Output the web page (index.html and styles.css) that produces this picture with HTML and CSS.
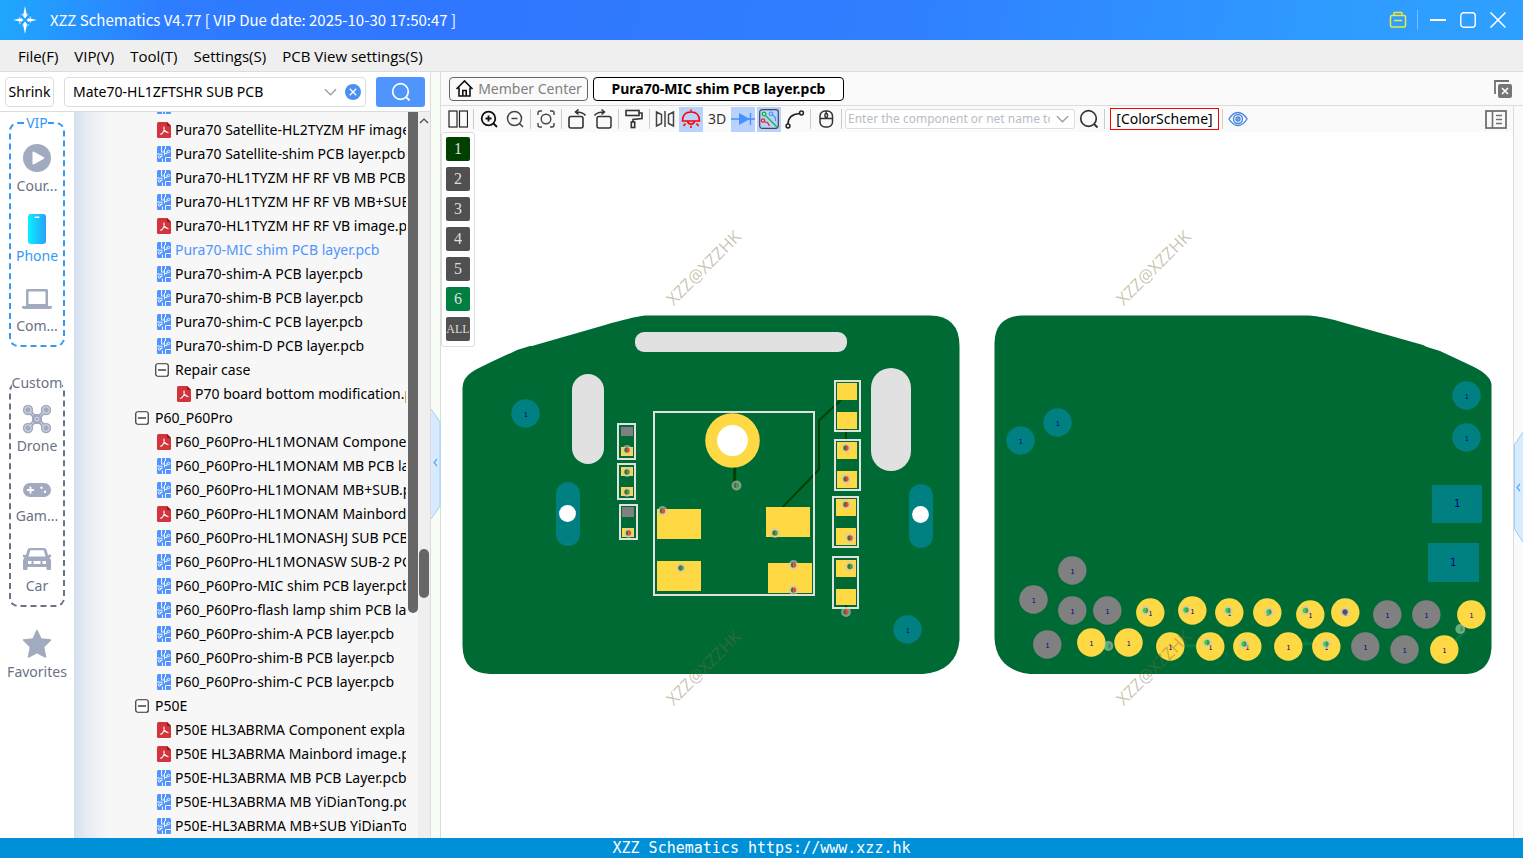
FILE: index.html
```html
<!DOCTYPE html>
<html lang="en">
<head>
<meta charset="utf-8">
<title>XZZ Schematics V4.77</title>
<link rel="stylesheet" href="styles.css">
</head>
<body>
<svg class="defs" aria-hidden="true">
  <symbol id="i-pdf" viewBox="0 0 14 16">
    <path d="M1.500 0H10L14 4V14.500Q14 16 12.500 16H1.500Q0 16 0 14.500V1.500Q0 0 1.500 0Z" fill="#d2343c"/>
    <path d="M10 0L14 4H11Q10 4 10 3Z" fill="#8e1218"/>
    <path d="M7 5Q7.800 7.500 6.200 10Q5 12.200 3.400 12.300M6.600 9.400Q9.200 9 11 10.700M6.800 6Q7.200 8.600 9.400 10.200" fill="none" stroke="#fff" stroke-width="1.100" stroke-linecap="round"/>
  </symbol>
  <symbol id="i-pcb" viewBox="0 0 14 16">
    <rect width="14" height="16" rx="1.500" fill="#5095fe"/>
    <path d="M4.500 0V6H7.500M8.500 0V3M7.500 3V9.500M7.500 7.500H10V5.500H11M3 10.500H5V8H0M5.500 16V12.500M8.500 16V11.500H14" fill="none" stroke="#fff" stroke-width=".9"/>
    <g fill="#5095fe" stroke="#fff" stroke-width=".9"><circle cx="11.500" cy="5.500" r="1.200"/><circle cx="2.500" cy="11" r="1.200"/></g>
  </symbol>
  <symbol id="i-minus" viewBox="0 0 14 14">
    <rect x=".75" y=".75" width="12.500" height="12.500" rx="2" fill="#fff" stroke="#333" stroke-width="1.200"/>
    <path d="M3 7H11" stroke="#222" stroke-width="1.300"/>
  </symbol>
  <symbol id="i-glass" viewBox="0 0 20 20">
    <circle cx="9.500" cy="9.500" r="7.800" fill="none" stroke="currentColor" stroke-width="1.700"/>
    <path d="M15 15L18.500 18.500" stroke="currentColor" stroke-width="1.900"/>
  </symbol>
  <symbol id="i-chev" viewBox="0 0 14 8"><path d="M1 1L7 7L13 1" fill="none" stroke="currentColor" stroke-width="1.500"/></symbol>
</svg>

<header class="titlebar">
  <svg class="logo" viewBox="0 0 24 28" aria-hidden="true">
    <path d="M12 0L14 10L12 12.500L10 10ZM12 28L14 18L12 15.500L10 18ZM0 14L8.500 12.200L10.500 14L8.500 15.800ZM24 14L15.500 12.200L13.500 14L15.500 15.800Z" fill="#fff"/>
    <circle cx="12" cy="14" r="6" fill="none" stroke="#cfe6ff" stroke-width="1.200" stroke-dasharray="2.700 2" opacity=".8"/>
  </svg>
  <h1 class="title">XZZ Schematics V4.77 [ VIP Due date: 2025-10-30 17:50:47 ]</h1>
  <div class="window-controls">
    <button class="win" aria-label="Account"><svg width="18" height="18" viewBox="0 0 18 18" fill="none" stroke="#e8ea3e" stroke-width="1.500"><rect x="1.500" y="4.500" width="15" height="11.500" rx="1.500"/><path d="M5 4.500V2.200Q5 1.500 6 1.500H12Q13 1.500 13 2.200V4.500M5 9.500H13"/></svg></button>
    <span class="win-sep"></span>
    <button class="win" aria-label="Minimize"><svg width="16" height="16" viewBox="0 0 16 16"><path d="M0 8H16" stroke="#fff" stroke-width="2"/></svg></button>
    <button class="win" aria-label="Maximize"><svg width="16" height="16" viewBox="0 0 16 16"><rect x=".75" y=".75" width="14.500" height="14.500" rx="3" fill="none" stroke="#fff" stroke-width="1.400"/></svg></button>
    <button class="win" aria-label="Close"><svg width="16" height="16" viewBox="0 0 16 16"><path d="M.5 .5L15.500 15.500M15.500 .5L.5 15.500" stroke="#fff" stroke-width="1.500"/></svg></button>
  </div>
</header>

<nav class="menubar">
  <button>File(F)</button><button>VIP(V)</button><button>Tool(T)</button><button>Settings(S)</button><button>PCB View settings(S)</button>
</nav>

<main class="workspace">
  <section class="left">
    <form class="searchbar">
      <button type="button" class="shrink">Shrink</button>
      <div class="combo">
        <input type="text" aria-label="Search files" value="Mate70-HL1ZFTSHR SUB PCB">
        <svg class="chev" aria-hidden="true"><use href="#i-chev"/></svg>
        <button type="button" class="clear" aria-label="Clear"><svg width="16" height="16" viewBox="0 0 16 16"><circle cx="8" cy="8" r="8" fill="#4a90f0"/><path d="M4.800 4.800L11.200 11.200M11.200 4.800L4.800 11.200" stroke="#fff" stroke-width="1.300"/></svg></button>
      </div>
      <button type="button" class="search-btn" aria-label="Search"><svg width="20" height="20"><use href="#i-glass"/></svg></button>
    </form>
    <div class="left-body">
      <aside class="cats">
        <fieldset class="group vip">
          <legend>VIP</legend>
          <button class="cat"><svg viewBox="0 0 30 30"><circle cx="15" cy="15" r="14" fill="#a2aac0"/><path d="M10.500 9.500Q10.500 8 12 8.700L21.500 14Q23 15 21.500 16L12 21.300Q10.500 22 10.500 20.500Z" fill="#fff"/></svg><span>Cour...</span></button>
          <button class="cat active"><svg viewBox="0 0 30 30"><defs><linearGradient id="ph"><stop offset="0" stop-color="#08f0ff"/><stop offset="1" stop-color="#2aa0fc"/></linearGradient></defs><rect x="6" y="1" width="18" height="30" rx="3" fill="url(#ph)"/><rect x="12.500" y="3.500" width="5" height="1.500" rx=".7" fill="#fff"/></svg><span>Phone</span></button>
          <button class="cat"><svg viewBox="0 0 30 30"><path d="M4 7.500Q4 6 5.500 6H24.500Q26 6 26 7.500V23H4ZM6.500 8.500V21H23.500V8.500Z" fill="#a2aac0" fill-rule="evenodd"/><path d="M0 23H30V24Q30 26 28 26H2Q0 26 0 24Z" fill="#a2aac0"/></svg><span>Com...</span></button>
        </fieldset>
        <fieldset class="group custom">
          <legend>Custom</legend>
          <button class="cat"><svg viewBox="0 0 30 30"><path d="M7 8L12 13V19L7 24M23 8L18 13V19L23 24" stroke="#a2aac0" stroke-width="4" fill="none"/><rect x="10" y="11" width="10" height="10" rx="2.500" fill="#a2aac0"/><g fill="#a2aac0"><circle cx="6" cy="7" r="5.200"/><circle cx="24" cy="7" r="5.200"/><circle cx="6" cy="25" r="5.200"/><circle cx="24" cy="25" r="5.200"/></g><g fill="none" stroke="#e4e7ee" stroke-width=".8"><circle cx="6" cy="7" r="3.300"/><circle cx="24" cy="7" r="3.300"/><circle cx="6" cy="25" r="3.300"/><circle cx="24" cy="25" r="3.300"/><circle cx="15" cy="16" r="2"/><path d="M7.500 8.500L11.500 12.500M22.500 8.500L18.500 12.500M7.500 23.500L11.500 19.500M22.500 23.500L18.500 19.500"/></g></svg><span>Drone</span></button>
          <button class="cat"><svg viewBox="0 0 30 30"><rect x="1" y="10" width="28" height="14" rx="7" fill="#a2aac0"/><path d="M8.500 13.500V20.500M5 17H12" stroke="#fff" stroke-width="1.800"/><circle cx="19.500" cy="14.800" r="1.200" fill="#fff"/><circle cx="23" cy="18.800" r="1.200" fill="#fff"/></svg><span>Gam...</span></button>
          <button class="cat"><svg viewBox="0 0 30 30"><path d="M8 5H22Q24 5 24.600 7L26 12L29 11.500V14L27.500 14.500Q29 16 29 18V26Q29 27 28 27H25.500Q24.500 27 24.500 26V24H5.500V26Q5.500 27 4.500 27H2Q1 27 1 26V18Q1 16 2.500 14.500L1 14V11.500L4 12L5.400 7Q6 5 8 5ZM8.300 7.200L6.500 13.500H23.500L21.700 7.200ZM6 18V21H9.500V18ZM11.500 18V21H18.500V18ZM20.500 18V21H24V18Z" fill="#a2aac0" fill-rule="evenodd"/></svg><span>Car</span></button>
        </fieldset>
        <button class="cat fav"><svg viewBox="0 0 30 30"><path d="M15 1.500L19 10L28.500 11L21.500 18L23.500 28L15 23.500L6.500 28L8.500 18L1.500 11L11 10Z" fill="#a2aac0" stroke="#a2aac0" stroke-width="1.500" stroke-linejoin="round"/></svg><span>Favorites</span></button>
      </aside>

      <div class="tree">
        <ul class="rows">
          <li class="l2"><a href="#"><svg class="f"><use href="#i-pcb"/></svg>Pura70 Satellite-HL2TYZM HF MB</a></li>
          <li class="l2"><a href="#"><svg class="f"><use href="#i-pdf"/></svg>Pura70 Satellite-HL2TYZM HF image.pdf</a></li>
          <li class="l2"><a href="#"><svg class="f"><use href="#i-pcb"/></svg>Pura70 Satellite-shim PCB layer.pcb</a></li>
          <li class="l2"><a href="#"><svg class="f"><use href="#i-pcb"/></svg>Pura70-HL1TYZM HF RF VB MB PCB layer.pcb</a></li>
          <li class="l2"><a href="#"><svg class="f"><use href="#i-pcb"/></svg>Pura70-HL1TYZM HF RF VB MB+SUB.pcb</a></li>
          <li class="l2"><a href="#"><svg class="f"><use href="#i-pdf"/></svg>Pura70-HL1TYZM HF RF VB image.pdf</a></li>
          <li class="l2 sel"><a href="#"><svg class="f"><use href="#i-pcb"/></svg>Pura70-MIC shim PCB layer.pcb</a></li>
          <li class="l2"><a href="#"><svg class="f"><use href="#i-pcb"/></svg>Pura70-shim-A PCB layer.pcb</a></li>
          <li class="l2"><a href="#"><svg class="f"><use href="#i-pcb"/></svg>Pura70-shim-B PCB layer.pcb</a></li>
          <li class="l2"><a href="#"><svg class="f"><use href="#i-pcb"/></svg>Pura70-shim-C PCB layer.pcb</a></li>
          <li class="l2"><a href="#"><svg class="f"><use href="#i-pcb"/></svg>Pura70-shim-D PCB layer.pcb</a></li>
          <li class="l2"><button><svg class="x"><use href="#i-minus"/></svg>Repair case</button></li>
          <li class="l3"><a href="#"><svg class="f"><use href="#i-pdf"/></svg>P70 board bottom modification.pdf</a></li>
          <li class="l1"><button><svg class="x"><use href="#i-minus"/></svg>P60_P60Pro</button></li>
          <li class="l2"><a href="#"><svg class="f"><use href="#i-pdf"/></svg>P60_P60Pro-HL1MONAM Component.pdf</a></li>
          <li class="l2"><a href="#"><svg class="f"><use href="#i-pcb"/></svg>P60_P60Pro-HL1MONAM MB PCB layer.pcb</a></li>
          <li class="l2"><a href="#"><svg class="f"><use href="#i-pcb"/></svg>P60_P60Pro-HL1MONAM MB+SUB.pcb</a></li>
          <li class="l2"><a href="#"><svg class="f"><use href="#i-pdf"/></svg>P60_P60Pro-HL1MONAM Mainbord.pdf</a></li>
          <li class="l2"><a href="#"><svg class="f"><use href="#i-pcb"/></svg>P60_P60Pro-HL1MONASHJ SUB PCB.pcb</a></li>
          <li class="l2"><a href="#"><svg class="f"><use href="#i-pcb"/></svg>P60_P60Pro-HL1MONASW SUB-2 PCB.pcb</a></li>
          <li class="l2"><a href="#"><svg class="f"><use href="#i-pcb"/></svg>P60_P60Pro-MIC shim PCB layer.pcb</a></li>
          <li class="l2"><a href="#"><svg class="f"><use href="#i-pcb"/></svg>P60_P60Pro-flash lamp shim PCB layer.pcb</a></li>
          <li class="l2"><a href="#"><svg class="f"><use href="#i-pcb"/></svg>P60_P60Pro-shim-A PCB layer.pcb</a></li>
          <li class="l2"><a href="#"><svg class="f"><use href="#i-pcb"/></svg>P60_P60Pro-shim-B PCB layer.pcb</a></li>
          <li class="l2"><a href="#"><svg class="f"><use href="#i-pcb"/></svg>P60_P60Pro-shim-C PCB layer.pcb</a></li>
          <li class="l1"><button><svg class="x"><use href="#i-minus"/></svg>P50E</button></li>
          <li class="l2"><a href="#"><svg class="f"><use href="#i-pdf"/></svg>P50E HL3ABRMA Component explain.pdf</a></li>
          <li class="l2"><a href="#"><svg class="f"><use href="#i-pdf"/></svg>P50E HL3ABRMA Mainbord image.pdf</a></li>
          <li class="l2"><a href="#"><svg class="f"><use href="#i-pcb"/></svg>P50E-HL3ABRMA MB PCB Layer.pcb</a></li>
          <li class="l2"><a href="#"><svg class="f"><use href="#i-pcb"/></svg>P50E-HL3ABRMA MB YiDianTong.pcb</a></li>
          <li class="l2"><a href="#"><svg class="f"><use href="#i-pcb"/></svg>P50E-HL3ABRMA MB+SUB YiDianTong.pcb</a></li>
        </ul>
      </div>
      <div class="bar inner"><div class="thumb"></div></div>
      <div class="bar outer"><svg width="10" height="6" viewBox="0 0 10 6"><path d="M1 5L5 1L9 5" fill="none" stroke="#444" stroke-width="1.200"/></svg><div class="thumb"></div></div>
    </div>
  </section>

  <div class="splitter">
    <svg width="10" height="112" viewBox="0 0 10 112"><path d="M0 1L9 14V98L0 111" fill="#d8ebfe" stroke="#9fcffb"/><path d="M6 51L3 54.500L6 58" fill="none" stroke="#55a8f5" stroke-width="1.200"/></svg>
  </div>

  <section class="right">
    <div class="tabs">
      <button class="tab home"><svg width="19" height="19" viewBox="0 0 19 19"><path d="M1.500 10L9.500 2L17.500 10M4 8.500V17H15V8.500M7.800 17V11.500H11.200V17" fill="none" stroke="#111" stroke-width="1.600"/></svg>Member Center</button>
      <button class="tab current">Pura70-MIC shim PCB layer.pcb</button>
      <button class="close-all" aria-label="Close all tabs"><svg width="18" height="18" viewBox="0 0 18 18"><path d="M1 14V1H15" fill="none" stroke="#707070" stroke-width="1.800"/><rect x="4" y="4" width="14" height="14" rx="2" fill="#757575"/><path d="M8 8L14 14M14 8L8 14" stroke="#fff" stroke-width="1.600"/></svg></button>
    </div>
    <div class="right-body">
      <div class="viewer">
        <div class="toolbar">
          <button class="tool" aria-label="Split view"><svg width="20" height="20" viewBox="0 0 20 20" fill="none" stroke="#222" stroke-width="1.200"><rect x="1" y="2" width="8" height="16"/><rect x="11.500" y="2" width="8" height="16"/></svg></button>
          <i class="sep"></i>
          <button class="tool" aria-label="Zoom in"><svg width="20" height="20" viewBox="0 0 20 20" fill="none" stroke="#111" stroke-width="1.800"><circle cx="9.500" cy="9.500" r="6.800"/><path d="M14.500 14.500L18 18M6.500 9.500H12.500M9.500 6.500V12.500"/></svg></button>
          <button class="tool" aria-label="Zoom out"><svg width="20" height="20" viewBox="0 0 20 20" fill="none" stroke="#444" stroke-width="1.500"><circle cx="9.500" cy="9.500" r="7"/><path d="M14.500 14.500L18 18M6.500 9.500H12.500"/></svg></button>
          <i class="sep"></i>
          <button class="tool" aria-label="Fit"><svg width="20" height="20" viewBox="0 0 20 20" fill="none" stroke="#444" stroke-width="1.400"><path d="M2 6V4Q2 2 4 2H6M14 2H16Q18 2 18 4V6M18 14V16Q18 18 16 18H14M6 18H4Q2 18 2 16V14"/><circle cx="10" cy="10" r="4.800"/></svg></button>
          <i class="sep"></i>
          <button class="tool" aria-label="Rotate left"><svg width="20" height="20" viewBox="0 0 20 20" fill="none" stroke="#333" stroke-width="1.600"><rect x="2" y="7.500" width="14" height="11.500" rx="2"/><path d="M18.500 6.500Q16 3 9 3M11.500 .5L8.500 3L11.500 5.500"/></svg></button>
          <button class="tool" aria-label="Rotate right"><svg width="20" height="20" viewBox="0 0 20 20" fill="none" stroke="#333" stroke-width="1.500"><rect x="4" y="7.500" width="14" height="11.500" rx="2"/><path d="M1.500 6.500Q4 3 11 3M8.500 .5L11.500 3L8.500 5.500"/></svg></button>
          <i class="sep"></i>
          <button class="tool" aria-label="Paint"><svg width="20" height="20" viewBox="0 0 20 20" fill="none" stroke="#333" stroke-width="1.600"><rect x="2" y="1.500" width="13" height="5"/><path d="M15 4H18V9.500L9 10.500V13"/><rect x="7.300" y="13" width="3.400" height="5.500"/></svg></button>
          <i class="sep"></i>
          <button class="tool" aria-label="Mirror"><svg width="20" height="20" viewBox="0 0 20 20" fill="none" stroke="#444" stroke-width="1.500"><path d="M1.500 3V17L6.500 14.500V5.500ZM18.500 3V17L13.500 14.500V5.500ZM10 2V18"/></svg></button>
          <button class="tool on" aria-label="Light"><svg width="20" height="20" viewBox="0 0 20 20" fill="none" stroke="#f00" stroke-width="1.500"><path d="M10 .5V3M1.500 12Q1.500 3 10 3T18.500 12ZM6.500 12.500Q7 15 10 15T13.500 12.500M10 16.500V19M4.500 14.500L2.500 17M15.500 14.500L17.500 17"/></svg></button>
          <button class="tool">3D</button>
          <button class="tool on" aria-label="Diode"><svg width="24" height="20" viewBox="0 0 24 20"><path d="M0 10H24M19.500 4V16" stroke="#4a90ff" stroke-width="1.400"/><path d="M8 4V16L19 10Z" fill="#4a90ff"/></svg></button>
          <button class="tool on" aria-label="Net colours"><svg width="20" height="20" viewBox="0 0 20 20" fill="none" stroke-width="1.200"><rect x=".7" y=".7" width="18.600" height="18.600" rx="2.500" stroke="#445"/><path d="M6.500 6.500L18 18" stroke="#00c030"/><circle cx="5" cy="5" r="1.800" stroke="#00c030"/><circle cx="12" cy="4.800" r="1.800" stroke="#4a90ff"/><path d="M13.500 6L16.500 8.500V12" stroke="#4a90ff"/><circle cx="4" cy="11.500" r="1.700" stroke="#e82020"/><path d="M5.500 13L8.500 13.500L10.500 17" stroke="#e82020"/></svg></button>
          <button class="tool" aria-label="Curve"><svg width="20" height="20" viewBox="0 0 20 20" fill="none" stroke="#222" stroke-width="1.500"><circle cx="3" cy="17" r="1.900"/><circle cx="16.500" cy="4" r="1.900"/><path d="M3 15Q3 5.500 14.500 4.500"/></svg></button>
          <i class="sep"></i>
          <button class="tool" aria-label="Mouse"><svg width="20" height="20" viewBox="0 0 20 20" fill="none" stroke="#333" stroke-width="1.500"><rect x="4" y="2" width="12.500" height="16" rx="5"/><path d="M4 9.500H16.500M10.200 2V4.500"/><rect x="9" y="4.500" width="2.500" height="4" rx="1.200"/></svg></button>
          <i class="sep"></i>
          <div class="net-box"><input type="text" aria-label="Component or net name" placeholder="Enter the component or net name to search"><svg class="chev"><use href="#i-chev"/></svg></div>
          <button class="tool" aria-label="Find"><svg width="20" height="20"><use href="#i-glass"/></svg></button>
          <i class="sep"></i>
          <button class="scheme">[ColorScheme]</button>
          <i class="sep"></i>
          <button class="tool" aria-label="Visibility"><svg width="20" height="20" viewBox="0 0 20 20" fill="none" stroke="#4a86e0" stroke-width="1.400"><path d="M1 10Q5 3.500 10 3.500T19 10Q15 16.500 10 16.500T1 10Z"/><circle cx="10" cy="10" r="4.500"/><circle cx="10" cy="10" r="2"/><path d="M8.500 11.500L11.500 8.500"/></svg></button>
          <button class="panel-btn" aria-label="Panel"><svg width="22" height="19" viewBox="0 0 22 19"><rect x="1" y="1" width="20" height="17" fill="none" stroke="#707070" stroke-width="1.800"/><path d="M7.500 1V18M11 5.500H17M11 9.500H17M11 13.500H17" stroke="#707070" stroke-width="1.600"/></svg></button>
        </div>
        <div class="canvas">
          <svg class="board" viewBox="441 132 1072 706" role="img" aria-label="PCB layer">
            <defs>
              <g id="vr"><circle r="4.900" fill="#c8c8c8" opacity=".6"/><path d="M0 -2.700A2.700 2.700 0 0 0 0 2.700Z" fill="#4a7030"/><path d="M0 -2.700A2.700 2.700 0 0 1 0 2.700Z" fill="#f2452f"/></g>
              <g id="vg"><circle r="4.900" fill="#c8c8c8" opacity=".6"/><path d="M0 -2.700A2.700 2.700 0 0 0 0 2.700Z" fill="#4a7030"/><path d="M0 -2.700A2.700 2.700 0 0 1 0 2.700Z" fill="#55983a"/></g>
              <g id="vb"><circle r="4.900" fill="#c8c8c8" opacity=".6"/><path d="M0 -2.700A2.700 2.700 0 0 0 0 2.700Z" fill="#28d83a"/><path d="M0 -2.700A2.700 2.700 0 0 1 0 2.700Z" fill="#4a9060"/></g>
              <g id="pg"><circle r="14.200" fill="#808080"/><text class="pin" y="3">1</text></g>
              <g id="py"><circle r="14.200" fill="#ffd943"/><text class="pin" y="3">1</text></g>
              <g id="pt"><circle r="14.200" fill="#008080"/><text class="pin" y="3">1</text></g>
            </defs>
            <g fill="#006a35">
              <path d="M462.500 388Q462.500 378 472 372Q482 366 513 352L517 350L530 346L532 346L605 325Q632 317 645 315.500H930Q959.500 316 959.500 346V640Q957 671 923 674H490Q463 673 462.500 646Z"/>
              <path d="M994.500 343Q995 317 1021 315.500H1309Q1322 316 1345 323L1423 345L1427 347L1440 351L1472 366Q1491 375 1491.500 385V648Q1490 672 1467 674H1030Q996 670 994.500 638Z"/>
            </g>
            <g fill="#e1e1e1"><rect x="635" y="332" width="212" height="20" rx="9"/><rect x="572" y="374" width="32" height="90" rx="16"/><rect x="871" y="368" width="40" height="103" rx="20"/></g>
            <g fill="#008080"><rect x="556" y="482" width="24" height="64" rx="12"/><rect x="909" y="484" width="24" height="64" rx="12"/><rect x="1432" y="485" width="50" height="38"/><rect x="1428" y="543" width="51" height="39"/></g>
            <g fill="none" stroke="#004000" stroke-width="2"><path d="M782.700 507L819 469.500V420.500L841 400M846 429V441M846 605V610"/><path d="M734.700 467V483" stroke-width="3"/></g>
            <g fill="none" stroke="#008040" stroke-width="3"><path d="M1184 645.700H1197M1302 643.700H1313M1455 641L1465 631"/></g>
            <g fill="none" stroke="#e1e1e1" stroke-width="2">
              <rect x="654" y="412" width="160" height="183"/>
              <rect x="835" y="381" width="25" height="50"/><rect x="835" y="440" width="25" height="50"/><rect x="833" y="497" width="25" height="50"/><rect x="833" y="557" width="25" height="51"/>
              <rect x="618" y="424" width="17" height="35"/><rect x="618" y="464" width="17" height="35"/><rect x="620" y="505" width="17" height="34"/>
            </g>
            <g fill="#ffd943">
              <circle cx="732.500" cy="440.500" r="27.300"/>
              <rect x="657" y="509" width="44" height="30"/><rect x="766" y="507" width="44" height="30"/><rect x="657" y="561" width="44" height="30"/><rect x="768" y="563" width="44" height="30"/>
              <rect x="837" y="383" width="20" height="17"/><rect x="837" y="412" width="20" height="17"/><rect x="837" y="442" width="20" height="17"/><rect x="837" y="471" width="20" height="17"/>
              <rect x="836" y="499" width="20" height="17"/><rect x="836" y="528" width="20" height="17"/><rect x="836" y="560" width="20" height="17"/><rect x="836" y="589" width="20" height="16"/>
              <rect x="621" y="447" width="12" height="9"/><rect x="621" y="467" width="12" height="9"/><rect x="621" y="487" width="12" height="9"/><rect x="622" y="528" width="12" height="9"/>
            </g>
            <g fill="#808080"><rect x="621" y="427" width="12" height="9"/><rect x="622" y="507" width="12" height="10"/></g>
            <g fill="#fff"><circle cx="732.500" cy="440.500" r="15.400"/><circle cx="567.500" cy="513.500" r="8.400"/><circle cx="920.500" cy="514.500" r="8.400"/></g>
            <use href="#pt" x="525.500" y="413.500"/><use href="#pt" x="907.500" y="629.500"/><use href="#pt" x="1020.500" y="440.500"/><use href="#pt" x="1057.500" y="422.500"/><use href="#pt" x="1466.500" y="395.500"/><use href="#pt" x="1466.500" y="437.500"/>
            <text class="pin big" x="1457" y="507">1</text><text class="pin big" x="1453" y="566">1</text>
            <use href="#pg" x="1072.300" y="570.500"/><use href="#pg" x="1033.500" y="599.500"/><use href="#pg" x="1072.300" y="610.500"/><use href="#pg" x="1107.300" y="610.500"/><use href="#pg" x="1047.300" y="644.500"/><use href="#pg" x="1387.300" y="614.500"/><use href="#pg" x="1426.300" y="614.500"/><use href="#pg" x="1365.300" y="646.500"/><use href="#pg" x="1404.500" y="649.500"/>
            <use href="#py" x="1091.300" y="642.500"/><use href="#py" x="1128.500" y="642.500"/><use href="#py" x="1150.300" y="612.500"/><use href="#py" x="1192.300" y="610.500"/><use href="#py" x="1229.300" y="612.500"/><use href="#py" x="1267.300" y="612.500"/><use href="#py" x="1310.300" y="614.500"/><use href="#py" x="1345.300" y="612.500"/><use href="#py" x="1170.300" y="646.500"/><use href="#py" x="1210.300" y="646.500"/><use href="#py" x="1247.300" y="646.500"/><use href="#py" x="1288.300" y="646.500"/><use href="#py" x="1326.300" y="646.500"/><use href="#py" x="1444.300" y="649.500"/><use href="#py" x="1471.300" y="614.500"/>
            <use href="#vr" x="627" y="450"/><use href="#vg" x="627" y="472"/><use href="#vg" x="627" y="492"/><use href="#vr" x="628.500" y="533"/><use href="#vg" x="736.500" y="485.500"/><use href="#vr" x="662.500" y="511"/><use href="#vg" x="775" y="533"/><use href="#vg" x="681" y="568"/><use href="#vr" x="793.500" y="565"/><use href="#vr" x="793.500" y="590"/><use href="#vr" x="846" y="448"/><use href="#vr" x="846" y="479"/><use href="#vr" x="846" y="504.500"/><use href="#vr" x="850" y="538"/><use href="#vg" x="850" y="566.500"/><use href="#vr" x="846" y="612"/>
            <use href="#vb" x="1108.300" y="646"/><use href="#vb" x="1145.500" y="610.500"/><use href="#vb" x="1186" y="610"/><use href="#vb" x="1228" y="610.500"/><use href="#vb" x="1269" y="612"/><use href="#vb" x="1305.500" y="610.500"/><use href="#vb" x="1207" y="642.500"/><use href="#vb" x="1244" y="644"/><use href="#vb" x="1326" y="644"/><use href="#vb" x="1460.300" y="629"/>
            <g transform="translate(1345 612)"><circle r="4.900" fill="#c8c8c8" opacity=".6"/><circle r="2.700" fill="#46507a"/></g>
            <g class="mark"><text transform="translate(708 272) rotate(-45)">XZZ@XZZHK</text><text transform="translate(1158 272) rotate(-45)">XZZ@XZZHK</text><text transform="translate(708 672) rotate(-45)">XZZ@XZZHK</text><text transform="translate(1158 672) rotate(-45)">XZZ@XZZHK</text></g>
          </svg>
          <div class="layers">
            <button class="first">1</button><button>2</button><button>3</button><button>4</button><button>5</button><button class="last">6</button><button class="all">ALL</button>
          </div>
        </div>
      </div>
      <div class="edge">
        <svg width="9" height="112" viewBox="0 0 9 112"><path d="M9 1L.5 14V98L9 111" fill="#d8ebfe" stroke="#9fcffb"/><path d="M6 53L3 56.500L6 60" fill="none" stroke="#55a8f5" stroke-width="1.200"/></svg>
      </div>
    </div>
  </section>
</main>

<footer class="statusbar">XZZ Schematics https://www.xzz.hk</footer>
</body>
</html>
```

FILE: styles.css
```css
* { box-sizing: border-box; }

body {
  margin: 0;
  height: 100vh;
  display: flex;
  flex-direction: column;
  overflow: hidden;
  background: #fff;
  color: #000;
  font: 14px/20px "Noto Sans", "Open Sans", sans-serif;
}

button, input { font: inherit; color: inherit; }
button { padding: 0; border: 0; background: none; }
input { border: 0; outline: 0; background: none; min-width: 0; }
a { color: inherit; text-decoration: none; }
svg { display: block; flex: none; }
.defs { position: absolute; width: 0; height: 0; }

/* Title bar */
.titlebar {
  flex: none;
  height: 40px;
  display: flex;
  align-items: center;
  padding: 0 17px 0 13px;
  color: #fff;
  background: linear-gradient(100deg, #1fa8fd 0, #2e7cff 11%, #3076ff 30%, #3080ff 60%, #2e9cff 88%, #2ea0ff 100%);
}
.logo { width: 24px; height: 28px; }
.title { margin: 0 0 0 13px; font: 400 15px/20px "Noto Sans CJK SC", sans-serif; }
.window-controls { margin-left: auto; display: flex; align-items: center; gap: 14px; }
.win { display: flex; }
.win-sep { width: 1px; height: 20px; margin: 0 -2px 0 -4px; background: #7cbcff; }

/* Menu */
.menubar {
  flex: none;
  height: 32px;
  display: flex;
  align-items: center;
  gap: 16px;
  padding: 0 18px;
  background: #efefef;
  border-bottom: 1px solid #dcdcdc;
  font: 15px/20px "Open Sans", sans-serif;
}

.workspace { flex: 1; min-height: 0; display: flex; }

/* Left panel */
.left { width: 431px; flex: none; display: flex; flex-direction: column; border-right: 1px solid #dcdcdc; }
.searchbar {
  flex: none;
  height: 40px;
  display: flex;
  align-items: center;
  gap: 10px;
  padding: 0 5px;
  border-bottom: 1px solid #dcdcdc;
}
.shrink { width: 49px; height: 30px; border: 1px solid #dcdcdc; border-radius: 4px; background: #fff; white-space: nowrap; }
.combo {
  flex: 1;
  height: 30px;
  display: flex;
  align-items: center;
  gap: 8px;
  padding: 0 4px 0 8px;
  border: 1px solid #dcdcdc;
  border-radius: 4px;
}
.combo input { flex: 1; padding: 0; }
.chev { width: 13px; height: 8px; color: #9aa0aa; }
.clear { display: flex; }
.search-btn { width: 49px; height: 30px; display: flex; align-items: center; justify-content: center; border-radius: 3px; background: #5095fe; color: #fff; }
.left-body { flex: 1; min-height: 0; display: flex; }

.cats { width: 74px; flex: none; display: flex; flex-direction: column; align-items: center; color: #697286; overflow: hidden; }
.group { width: 56px; margin: 0; padding: 9px 0 2px; border: 2px dashed #697286; border-radius: 9px; }
.group legend { margin: 0 auto; padding: 0; line-height: 22px; }
.vip { border-color: #3399f5; }
.vip legend { color: #3399f5; }
.custom { margin-top: 25px; }
.cat { width: 100%; height: 70px; display: flex; flex-direction: column; align-items: center; gap: 3px; }
.cat svg { width: 30px; height: 30px; overflow: visible; }
.cat.active span { color: #3399f5; }
.group .cat:last-child { height: 60px; }
.fav { margin-top: 22px; }

.tree {
  flex: 1;
  min-width: 0;
  overflow: hidden;
  padding-right: 1px;
  background: linear-gradient(90deg, #d5dff0 0, #e6ebf3 12px, #f7f7f7 36px);
}
.rows { margin: -18px 0 0; padding: 0; list-style: none; overflow: hidden; }
.rows li { height: 24px; overflow: hidden; }
.rows a, .rows button { height: 24px; display: flex; align-items: center; white-space: nowrap; }
.l1 { padding-left: 61px; }
.l2 { padding-left: 81px; }
.l3 { padding-left: 101px; }
.sel { color: #5095fe; }
.f { width: 14px; height: 16px; margin: 0 4px 0 2px; }
.x { width: 14px; height: 14px; margin-right: 6px; }

.bar { flex: none; display: flex; flex-direction: column; align-items: center; }
.inner { width: 11px; background: #f7f7f7; }
.inner .thumb { width: 10px; height: 69%; border-radius: 0 0 5px 5px; background: #666; }
.outer { width: 12px; padding-top: 6px; background: #efefef; }
.outer .thumb { width: 10px; height: 49px; margin-top: 425px; border-radius: 5px; background: #666; }

.splitter { width: 10px; flex: none; display: flex; align-items: center; padding-top: 18px; background: #f8fdf7; border-right: 1px solid #dcdcdc; }
.splitter svg { margin-right: -1px; }

/* Right panel */
.right { flex: 1; min-width: 0; display: flex; flex-direction: column; }
.tabs {
  flex: none;
  height: 34px;
  display: flex;
  align-items: center;
  gap: 5px;
  padding: 0 11px 0 8px;
  background: #fafafa;
  border-bottom: 1px solid #dcdcdc;
}
.tab { height: 24px; display: flex; align-items: center; justify-content: center; border: 1px solid #666; border-radius: 4px; background: #fafafa; white-space: nowrap; }
.home { width: 139px; gap: 4px; color: #808080; }
.current { width: 251px; border-color: #000; background: #fff; color: #000; font-weight: 700; }
.close-all { margin-left: auto; display: flex; }

.right-body { flex: 1; min-height: 0; display: flex; }
.viewer { flex: 1; min-width: 0; display: flex; flex-direction: column; }
.toolbar { flex: none; height: 26px; display: flex; align-items: center; gap: 2px; padding: 0 6px 0 5px; background: #fafafa; }
.tool { width: 24px; height: 25px; flex: none; display: flex; align-items: center; justify-content: center; color: #333; }
.on { background: #b8d2fb; }
.sep { flex: none; width: 1px; height: 20px; margin: 0 1px; background: #ccc; }
.net-box { flex: none; width: 230px; height: 20px; display: flex; align-items: center; gap: 6px; padding: 0 5px 0 2px; border: 1px solid #dcdcdc; border-radius: 3px; background: #fff; }
.net-box input { flex: 1; padding: 0; font-size: 12px; line-height: 18px; }
.net-box input::placeholder { color: #b8bcc6; opacity: 1; }
.scheme { flex: none; width: 109px; height: 22px; margin: 0 0 0 2px; border: 1px solid #f00; background: #fff; }
.panel-btn { margin-left: auto; display: flex; }

.canvas { flex: 1; min-height: 0; position: relative; }
.board { width: 100%; height: 100%; }
.pin { font: 7px "DejaVu Sans Mono", monospace; fill: #00008b; text-anchor: middle; }
.big { font-size: 10px; }
.mark { font: 17px "Open Sans", sans-serif; fill: #7a6a3a; fill-opacity: .4; text-anchor: middle; }

.layers {
  position: absolute;
  left: 0;
  top: 0;
  display: flex;
  flex-direction: column;
  gap: 6px;
  padding: 4px 4px 5px;
  border: 1px solid #dcdcdc;
  border-radius: 3px;
  background: #fff;
}
.layers button { width: 24px; height: 24px; border-radius: 2px; background: #505050; color: #ddd; font: 16px/20px "Liberation Serif", serif; }
.layers .first { background: #004000; }
.layers .last { background: #008040; }
.layers .all { font-size: 12px; }

.edge { width: 10px; flex: none; display: flex; align-items: center; padding-top: 30px; background: #fafafa; border-left: 1px solid #dcdcdc; }

.statusbar { flex: none; height: 20px; background: #0090d8; color: #fff; text-align: center; font: 15px/20px "DejaVu Sans Mono", monospace; }
```
